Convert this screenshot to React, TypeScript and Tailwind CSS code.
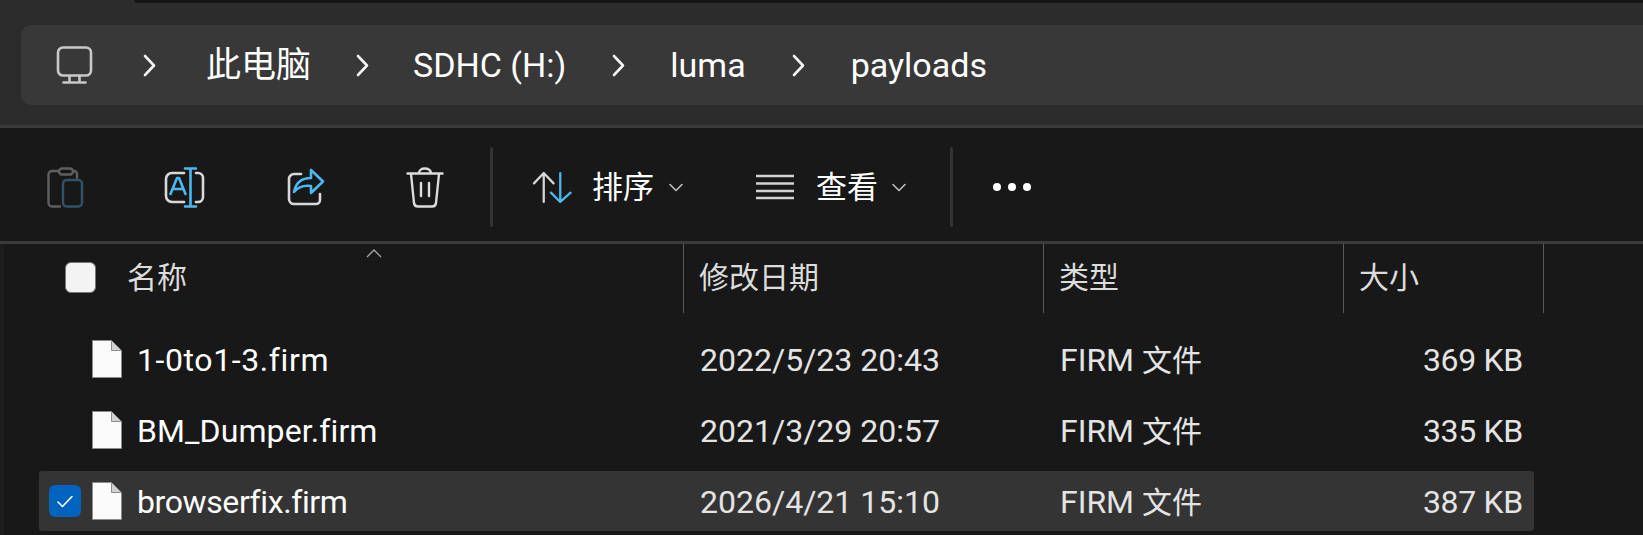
const font = "font-['Roboto','Noto_Sans_CJK_SC',sans-serif]";

function Chevron() {
  return (
    <svg width="13" height="23" viewBox="0 0 13 23" fill="none" stroke="#f2f2f2" strokeWidth="2.6" strokeLinecap="round" strokeLinejoin="round">
      <path d="M2 2l9 9.5L2 21" />
    </svg>
  );
}

function Down() {
  return (
    <svg width="14" height="9" viewBox="0 0 14 9" fill="none" stroke="#bdbdbd" strokeWidth="1.6" strokeLinecap="round" strokeLinejoin="round">
      <path d="M1 1.500l6 6 6-6" />
    </svg>
  );
}

function FileIcon() {
  return (
    <svg width="30" height="38" viewBox="0 0 30 38" className="shrink-0">
      <path d="M0.500 0.500H19.500L29.500 10.500V37.500H0.500Z" fill="#fbfbfb" stroke="#8c8c8c" />
      <path d="M19.500 0.500V10.500H29.500Z" fill="#d2d2d2" stroke="#8c8c8c" />
    </svg>
  );
}

function Divider() {
  return <div className="w-[3px] h-[80px] rounded-sm bg-[#333333]" />;
}

const rows = [
  { name: "1-0to1-3.firm", date: "2022/5/23 20:43", size: "369 KB", track: "tracking-[0.6px]" },
  { name: "BM_Dumper.firm", date: "2021/3/29 20:57", size: "335 KB", track: "tracking-[0.1px]" },
  { name: "browserfix.firm", date: "2026/4/21 15:10", size: "387 KB", track: "tracking-[-0.4px]", sel: true },
];

export default function App() {
  return (
    <div className={`w-[1643px] h-[535px] overflow-hidden flex flex-col bg-[#181818] ${font}`}>
      <div className="relative h-[125px] shrink-0 bg-[#2c2c2c] pl-[21px] pt-[25px]">
        <div className="absolute left-[134px] right-0 top-0 h-[3px] rounded-bl bg-[#161616]" />
        <div className="h-[80px] rounded-l-[10px] bg-[#383838] flex items-center text-[34px] leading-none text-white whitespace-nowrap">
          <svg width="37" height="38" viewBox="0 0 36 38" fill="none" stroke="#c8c8c8" strokeWidth="2.6" strokeLinecap="round" strokeLinejoin="round" className="ml-[35px]">
            <rect x="1.500" y="1.500" width="33" height="28" rx="5" />
            <path d="M13 30v6M23 30v6M7 36.500h22" />
          </svg>
          <div className="ml-[50px]"><Chevron /></div>
          <span className="ml-[50px] text-[35px]">此电脑</span>
          <div className="ml-[45px]"><Chevron /></div>
          <span className="ml-[44px]">SDHC (H:)</span>
          <div className="ml-[46px]"><Chevron /></div>
          <span className="ml-[45px]">luma</span>
          <div className="ml-[46px]"><Chevron /></div>
          <span className="ml-[46px]">payloads</span>
        </div>
      </div>
      <div className="h-[3px] shrink-0 bg-[#3b3b3b]" />

      <div className="h-[113px] shrink-0 flex items-center pt-[5px]">
        <svg width="38" height="41" viewBox="0 0 38 41" fill="none" strokeWidth="2.400" strokeLinecap="round" strokeLinejoin="round" className="ml-[47px]">
          <path d="M12 4H5a3.500 3.500 0 0 0-3.500 3.500V36a3.500 3.500 0 0 0 3.500 3.500H13M26 4h1a3 3 0 0 1 3 3v4" stroke="#5f5f5f" />
          <rect x="12" y="1.500" width="14" height="6" rx="3" stroke="#5f5f5f" />
          <rect x="16" y="13" width="19" height="26.500" rx="3.500" stroke="#30536b" />
        </svg>
        <svg width="41" height="41" viewBox="0 0 41 41" fill="none" strokeWidth="2.600" strokeLinecap="round" strokeLinejoin="round" className="ml-[79px]">
          <path d="M20 6H8a6 6 0 0 0-6 6v17a6 6 0 0 0 6 6h12M32 6h2a5 5 0 0 1 5 5v19a5 5 0 0 1-5 5h-2" stroke="#d8d8d8" />
          <path d="M6.500 27L13 11h2L21.500 27M9 22h10M21 1.500h11M21 39.500h11M26.500 1.500v38" stroke="#4cb8f0" />
        </svg>
        <svg width="38" height="38" viewBox="0 0 38 38" fill="none" strokeWidth="2.600" strokeLinecap="round" strokeLinejoin="round" className="ml-[82px]">
          <path d="M14 6H7a5 5 0 0 0-5 5v20a5 5 0 0 0 5 5h22a4 4 0 0 0 4-4v-6" stroke="#d8d8d8" />
          <path d="M24 2v8c-9 0-15 4-17 14 4-5 9-7 17-6v7l12-11.500z" stroke="#4cb8f0" />
        </svg>
        <svg width="38" height="41" viewBox="0 0 38 41" fill="none" stroke="#dcdcdc" strokeWidth="2.400" strokeLinecap="round" strokeLinejoin="round" className="ml-[81px]">
          <path d="M1.500 6.500h35M13 6c0-6 11-6 12 0M5 7l3 29a4 4 0 0 0 4 3.500h14a4 4 0 0 0 4-3.500l3-29M15 16v13M23 16v13" />
        </svg>
        <div className="ml-[46px]"><Divider /></div>
        <svg width="40" height="33" viewBox="0 0 38 32" fill="none" strokeWidth="2.200" strokeLinecap="round" strokeLinejoin="round" className="ml-[39px]">
          <path d="M11 30V2M1.500 12L11 2l9.500 10" stroke="#d6d6d6" />
          <path d="M27 2v28M18 21l9 9 10-9" stroke="#4cb8f0" />
        </svg>
        <span className="ml-[20px] text-[31px] leading-none text-white">排序</span>
        <div className="ml-[15px]"><Down /></div>
        <svg width="38" height="26" viewBox="0 0 38 26" fill="none" stroke="#d2d2d2" strokeWidth="2.400" className="ml-[73px]">
          <path d="M0 2h38M0 9.500h38M0 17h38M0 24h38" />
        </svg>
        <span className="ml-[22px] text-[31px] leading-none text-white">查看</span>
        <div className="ml-[14px]"><Down /></div>
        <div className="ml-[44px]"><Divider /></div>
        <div className="ml-[40px] flex gap-[7px]">
          <span className="size-[8px] rounded-full bg-white" />
          <span className="size-[8px] rounded-full bg-white" />
          <span className="size-[8px] rounded-full bg-white" />
        </div>
      </div>
      <div className="h-[3px] shrink-0 bg-[#3b3b3b]" />

      <div className="flex-1 border-l-[4px] border-[#1d1d1d]">
        <div className="relative grid grid-cols-[680px_360px_300px_200px] h-[69px] text-[30px] text-[#dcdcdc] leading-none mb-[16px]">
          <div className="flex items-center border-r border-[#5a5a5a] pb-[1px]">
            <div className="ml-[61px] size-[31px] rounded-[6px] bg-[#f3f3f3] border border-[#777777] mb-[2px]" />
            <span className="ml-[31px]">名称</span>
          </div>
          <div className="flex items-center pl-[15px] pb-[1px] border-r border-[#5a5a5a]">修改日期</div>
          <div className="flex items-center pl-[15px] pb-[1px] border-r border-[#5a5a5a]">类型</div>
          <div className="flex items-center pl-[15px] pb-[1px] border-r border-[#5a5a5a]">大小</div>
          <svg width="16" height="9" viewBox="0 0 16 9" fill="none" stroke="#a8a8a8" strokeWidth="1.300" className="absolute left-[362px] top-[5px]">
            <path d="M1 8l7-7 7 7" />
          </svg>
        </div>

        <div className="ml-[35px] w-[1495px] flex flex-col gap-[11px]">
          {rows.map((r) => (
            <div key={r.name} className={`grid grid-cols-[645px_360px_300px_190px] h-[60px] items-center rounded-[3px] text-[32px] leading-none ${r.sel ? "bg-[#343434]" : ""}`}>
              <div className="flex items-center">
                {r.sel ? (
                  <div className="ml-[10px] size-[32px] rounded-[6px] bg-[#0063bd] flex items-center justify-center">
                    <svg width="16" height="13" viewBox="0 0 16 13" fill="none" stroke="#ffffff" strokeWidth="1.600" strokeLinecap="round" strokeLinejoin="round">
                      <path d="M1 7l4.500 4.500L15 1.500" />
                    </svg>
                  </div>
                ) : (
                  <div className="ml-[10px] size-[32px]" />
                )}
                <div className="ml-[11px]"><FileIcon /></div>
                <span className={`ml-[15px] pt-[2px] text-white whitespace-nowrap ${r.track}`}>{r.name}</span>
              </div>
              <div className="pl-[16px] pt-[2px] text-[#e4e4e4] whitespace-nowrap">{r.date}</div>
              <div className="pl-[16px] pt-[2px] text-[#e4e4e4] whitespace-nowrap">FIRM <span className="text-[30px]">文件</span></div>
              <div className="pr-[11px] pt-[2px] text-right text-[#e4e4e4] whitespace-nowrap tracking-[-0.3px]">{r.size}</div>
            </div>
          ))}
        </div>
      </div>
    </div>
  );
}
